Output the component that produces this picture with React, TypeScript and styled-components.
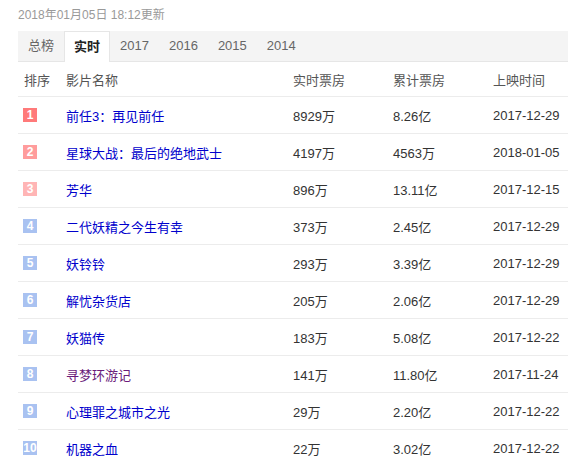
import React from "react";
import styled, { createGlobalStyle } from "styled-components";

const Global = createGlobalStyle`
  html, body { margin: 0; padding: 0; background: #fff; }
  body { font-family: "Liberation Sans", Arial, "Noto Sans CJK SC", sans-serif; }
`;

const Page = styled.div`
  padding: 7px 15px 0 18px;
  width: 550px;
`;

const Updated = styled.div`
  font-size: 12px;
  color: #999;
  height: 24px;
  line-height: 17px;
`;

const TabBar = styled.div`
  display: flex;
  height: 30px;
  background: #f4f4f4;
  border-bottom: 1px solid #e6e6e6;
`;

const Tab = styled.div<{ $active?: boolean }>`
  height: ${(p) => (p.$active ? "31px" : "30px")};
  line-height: 30px;
  padding: 0 ${(p) => (p.$active ? "9px" : "10px")};
  font-size: 13px;
  color: ${(p) => (p.$active ? "#222" : "#666")};
  font-weight: ${(p) => (p.$active ? "bold" : "normal")};
  background: ${(p) => (p.$active ? "#fff" : "transparent")};
  border: ${(p) => (p.$active ? "1px solid #e6e6e6" : "none")};
  border-bottom: none;
  box-sizing: border-box;
`;

const Row = styled.div<{ $head?: boolean }>`
  display: grid;
  grid-template-columns: 48px 227px 100px 100px 1fr;
  align-items: center;
  height: ${(p) => (p.$head ? "34px" : "36px")};
  border-bottom: 1px solid #ececec;
  font-size: 13px;
  color: ${(p) => (p.$head ? "#555" : "#333")};
`;

const Cell = styled.div<{ $first?: boolean }>`
  padding-left: ${(p) => (p.$first ? "6px" : "0")};
  white-space: nowrap;
`;

const RankCell = styled.div`
  padding-left: 5px;
  display: flex;
  align-items: center;
`;

const Badge = styled.span<{ $color: string }>`
  display: inline-block;
  width: 14px;
  height: 14px;
  line-height: 14px;
  text-align: center;
  font-size: 12px;
  font-weight: bold;
  color: #fff;
  background: ${(p) => p.$color};
  font-family: "Liberation Sans", Arial, sans-serif;
`;

const Title = styled.a<{ $visited?: boolean }>`
  color: ${(p) => (p.$visited ? "#6a1b7a" : "#0000cc")};
  text-decoration: none;
  font-size: 13px;
`;

const badgeColor = (n: number) =>
  n === 1 ? "#ff7a7a" : n === 2 ? "#ff9c9c" : n === 3 ? "#ffb5b5" : "#a9c2f1";

const rows = [
  ["前任3：再见前任", "8929万", "8.26亿", "2017-12-29"],
  ["星球大战：最后的绝地武士", "4197万", "4563万", "2018-01-05"],
  ["芳华", "896万", "13.11亿", "2017-12-15"],
  ["二代妖精之今生有幸", "373万", "2.45亿", "2017-12-29"],
  ["妖铃铃", "293万", "3.39亿", "2017-12-29"],
  ["解忧杂货店", "205万", "2.06亿", "2017-12-29"],
  ["妖猫传", "183万", "5.08亿", "2017-12-22"],
  ["寻梦环游记", "141万", "11.80亿", "2017-11-24"],
  ["心理罪之城市之光", "29万", "2.20亿", "2017-12-22"],
  ["机器之血", "22万", "3.02亿", "2017-12-22"],
];

const tabs = ["总榜", "实时", "2017", "2016", "2015", "2014"];

export default function App() {
  return (
    <Page>
      <Global />
      <Updated>2018年01月05日 18:12更新</Updated>
      <TabBar>
        {tabs.map((t) => (
          <Tab key={t} $active={t === "实时"}>
            {t}
          </Tab>
        ))}
      </TabBar>
      <Row $head>
        <Cell $first>排序</Cell>
        <Cell>影片名称</Cell>
        <Cell>实时票房</Cell>
        <Cell>累计票房</Cell>
        <Cell>上映时间</Cell>
      </Row>
      {rows.map((r, i) => (
        <Row key={i}>
          <RankCell>
            <Badge $color={badgeColor(i + 1)}>{i + 1}</Badge>
          </RankCell>
          <Cell>
            <Title href="#" $visited={i === 7}>
              {r[0]}
            </Title>
          </Cell>
          <Cell>{r[1]}</Cell>
          <Cell>{r[2]}</Cell>
          <Cell>{r[3]}</Cell>
        </Row>
      ))}
    </Page>
  );
}
